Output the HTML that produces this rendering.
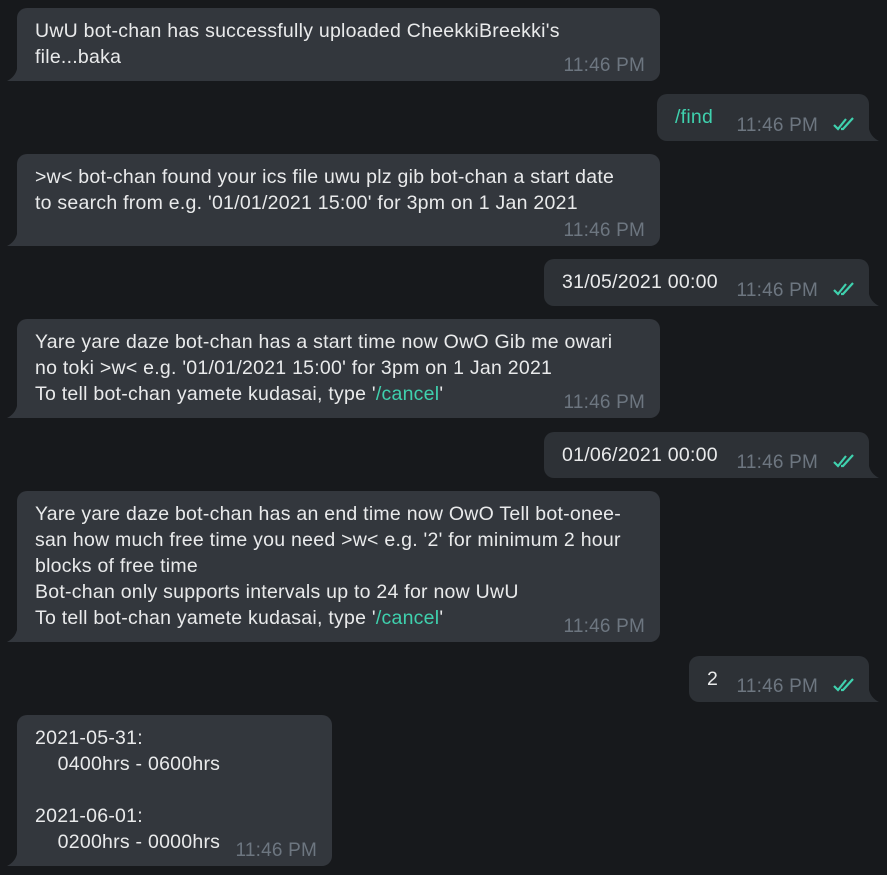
<!DOCTYPE html><html><head><meta charset="utf-8"><style>
body{margin:0;width:887px;height:875px;background:#17191c;font-family:"Liberation Sans",sans-serif;overflow:hidden;position:relative}
.b{position:absolute;background:#33373d;border-radius:10px;color:#e9eaeb;font-size:19.5px;letter-spacing:0.25px;line-height:26px;white-space:nowrap;box-sizing:border-box;padding:10px 18px}
.l{border-bottom-left-radius:0}
.r{border-bottom-right-radius:0;background:#2d3136}
.t{position:absolute;right:15px;bottom:4px;color:#6d7680;font-size:19px;letter-spacing:0.2px;line-height:22px}
.r .t{right:51px}
.ck{position:absolute;right:10px;bottom:10px}
.g{color:#3fd1ae}
svg.tl{position:absolute;left:-10px;bottom:0}
svg.tr{position:absolute;right:-10px;bottom:0}
</style></head><body>
<svg width="0" height="0" style="position:absolute"><defs>
<symbol id="tl" viewBox="0 0 10 12"><path d="M10 0 L10 12 L0 12 Q8 8 10 0Z"/></symbol>
<symbol id="tr" viewBox="0 0 10 12"><path d="M0 0 L0 12 L10 12 Q2 8 0 0Z"/></symbol>
<symbol id="ck" viewBox="0 0 26 14"><path d="M1 8 L5 12 L13 2 M8 12 L10 12 L20 1" stroke="#3fd1ae" stroke-width="2.2" fill="none"/></symbol>
</defs></svg>

<div class="b l" style="left:17px;top:8px;width:643px;height:73px">UwU bot-chan has successfully uploaded CheekkiBreekki's<br>file...baka<span class="t">11:46 PM</span><svg class="tl" width="10" height="12" fill="#33373d"><use href="#tl"/></svg></div>

<div class="b r" style="left:657px;top:94px;width:212px;height:47px"><span class="g">/find</span><span class="t">11:46 PM</span><svg class="ck" width="26" height="14"><use href="#ck"/></svg><svg class="tr" width="10" height="12" fill="#2d3136"><use href="#tr"/></svg></div>

<div class="b l" style="left:17px;top:154px;width:643px;height:92px">&gt;w&lt; bot-chan found your ics file uwu plz gib bot-chan a start date<br>to search from e.g. '01/01/2021 15:00' for 3pm on 1 Jan 2021<span class="t">11:46 PM</span><svg class="tl" width="10" height="12" fill="#33373d"><use href="#tl"/></svg></div>

<div class="b r" style="left:544px;top:259px;width:325px;height:47px">31/05/2021 00:00<span class="t">11:46 PM</span><svg class="ck" width="26" height="14"><use href="#ck"/></svg><svg class="tr" width="10" height="12" fill="#2d3136"><use href="#tr"/></svg></div>

<div class="b l" style="left:17px;top:319px;width:643px;height:99px">Yare yare daze bot-chan has a start time now OwO Gib me owari<br>no toki &gt;w&lt; e.g. '01/01/2021 15:00' for 3pm on 1 Jan 2021<br>To tell bot-chan yamete kudasai, type '<span class="g">/cancel</span>'<span class="t">11:46 PM</span><svg class="tl" width="10" height="12" fill="#33373d"><use href="#tl"/></svg></div>

<div class="b r" style="left:544px;top:432px;width:325px;height:46px">01/06/2021 00:00<span class="t">11:46 PM</span><svg class="ck" width="26" height="14"><use href="#ck"/></svg><svg class="tr" width="10" height="12" fill="#2d3136"><use href="#tr"/></svg></div>

<div class="b l" style="left:17px;top:491px;width:643px;height:151px">Yare yare daze bot-chan has an end time now OwO Tell bot-onee-<br>san how much free time you need &gt;w&lt; e.g. '2' for minimum 2 hour<br>blocks of free time<br>Bot-chan only supports intervals up to 24 for now UwU<br>To tell bot-chan yamete kudasai, type '<span class="g">/cancel</span>'<span class="t">11:46 PM</span><svg class="tl" width="10" height="12" fill="#33373d"><use href="#tl"/></svg></div>

<div class="b r" style="left:689px;top:656px;width:180px;height:46px">2<span class="t">11:46 PM</span><svg class="ck" width="26" height="14"><use href="#ck"/></svg><svg class="tr" width="10" height="12" fill="#2d3136"><use href="#tr"/></svg></div>

<div class="b l" style="left:17px;top:715px;width:315px;height:151px">2021-05-31:<br>&nbsp;&nbsp;&nbsp;&nbsp;0400hrs - 0600hrs<br><br>2021-06-01:<br>&nbsp;&nbsp;&nbsp;&nbsp;0200hrs - 0000hrs<span class="t">11:46 PM</span><svg class="tl" width="10" height="12" fill="#33373d"><use href="#tl"/></svg></div>
</body></html>
